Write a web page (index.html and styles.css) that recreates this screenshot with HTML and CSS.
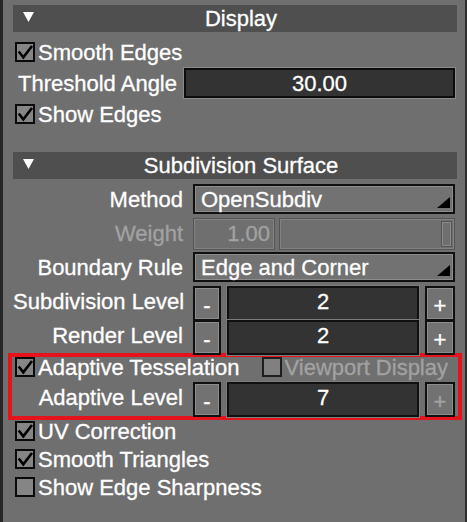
FILE: index.html
```html
<!DOCTYPE html>
<html lang="en">
<head>
  <meta charset="UTF-8">
  <title>Subdivision Panel</title>
  <link rel="stylesheet" href="styles.css">
</head>
<body>

  <div class="panel">

    <div class="section-head">
      <svg class="twisty" viewBox="0 0 11 10"><polygon points="0,0 11,0 5.5,10" fill="#fff"/></svg>
      <span class="section-title">Display</span>
    </div>

    <div class="rows">
      <div class="row check-row">
        <svg class="box" viewBox="0 0 20 20"><rect x="1" y="1" width="18" height="18" fill="#858585" stroke="#0a0a0a" stroke-width="2"/><path d="M3.7 9.5 L8.3 15.3 L17 4" fill="none" stroke="#000" stroke-width="2.6"/></svg>
        <span>Smooth Edges</span>
      </div>
      <div class="row field-row">
        <span class="field-label">Threshold Angle</span>
        <div class="num-field">30.00</div>
      </div>
      <div class="row check-row">
        <svg class="box" viewBox="0 0 20 20"><rect x="1" y="1" width="18" height="18" fill="#858585" stroke="#0a0a0a" stroke-width="2"/><path d="M3.7 9.5 L8.3 15.3 L17 4" fill="none" stroke="#000" stroke-width="2.6"/></svg>
        <span>Show Edges</span>
      </div>
    </div>

    <div class="section-head second">
      <svg class="twisty" viewBox="0 0 11 10"><polygon points="0,0 11,0 5.5,10" fill="#fff"/></svg>
      <span class="section-title">Subdivision Surface</span>
    </div>

    <div class="form-grid">
      <span class="label">Method</span>
      <div class="dropdown">
        <span class="dropdown-text">OpenSubdiv</span>
        <svg class="dropdown-arrow" viewBox="0 0 13 11"><polygon points="13,0 13,11 0,11" fill="#000"/></svg>
      </div>

      <span class="label disabled">Weight</span>
      <div class="weight">
        <div class="weight-field">1.00</div>
        <div class="slider"><span class="slider-handle"></span></div>
      </div>

      <span class="label">Boundary Rule</span>
      <div class="dropdown">
        <span class="dropdown-text">Edge and Corner</span>
        <svg class="dropdown-arrow" viewBox="0 0 13 11"><polygon points="13,0 13,11 0,11" fill="#000"/></svg>
      </div>

      <span class="label">Subdivision Level</span>
      <div class="spin">
        <div class="btn">-</div>
        <div class="value">2</div>
        <div class="btn">+</div>
      </div>

      <span class="label">Render Level</span>
      <div class="spin">
        <div class="btn">-</div>
        <div class="value">2</div>
        <div class="btn">+</div>
      </div>
    </div>

    <div class="highlight">
      <div class="adaptive-row">
        <div class="check-item">
          <svg class="box" viewBox="0 0 20 20"><rect x="1" y="1" width="18" height="18" fill="#858585" stroke="#0a0a0a" stroke-width="2"/><path d="M3.7 9.5 L8.3 15.3 L17 4" fill="none" stroke="#000" stroke-width="2.6"/></svg>
          <span>Adaptive Tesselation</span>
        </div>
        <div class="check-item disabled">
          <svg class="box" viewBox="0 0 20 20"><rect x="1" y="1" width="18" height="18" fill="#808080" stroke="#1e1e1e" stroke-width="2"/></svg>
          <span>Viewport Display</span>
        </div>
      </div>
      <div class="form-grid inner">
        <span class="label">Adaptive Level</span>
        <div class="spin">
          <div class="btn">-</div>
          <div class="value">7</div>
          <div class="btn disabled">+</div>
        </div>
      </div>
    </div>

    <div class="check-list">
      <div class="check-item">
        <svg class="box" viewBox="0 0 20 20"><rect x="1" y="1" width="18" height="18" fill="#858585" stroke="#0a0a0a" stroke-width="2"/><path d="M3.7 9.5 L8.3 15.3 L17 4" fill="none" stroke="#000" stroke-width="2.6"/></svg>
        <span>UV Correction</span>
      </div>
      <div class="check-item">
        <svg class="box" viewBox="0 0 20 20"><rect x="1" y="1" width="18" height="18" fill="#858585" stroke="#0a0a0a" stroke-width="2"/><path d="M3.7 9.5 L8.3 15.3 L17 4" fill="none" stroke="#000" stroke-width="2.6"/></svg>
        <span>Smooth Triangles</span>
      </div>
      <div class="check-item">
        <svg class="box" viewBox="0 0 20 20"><rect x="1" y="1" width="18" height="18" fill="#858585" stroke="#0a0a0a" stroke-width="2"/></svg>
        <span>Show Edge Sharpness</span>
      </div>
    </div>

  </div>

</body>
</html>
```

FILE: styles.css
```css
* {
  box-sizing: border-box;
}

body {
  margin: 0;
  height: 522px;
  overflow: hidden;
  background: #6f6f6f;
  border-left: 3px solid #262626;
  border-right: 2px solid #2e2e2e;
  font-family: "Liberation Sans", Arial, sans-serif;
  font-size: 22px;
  color: #fff;
  -webkit-text-stroke: 0.3px;
}

.panel {
  padding: 5px 8px 0 10px;
}

/* section headers */

.section-head {
  display: flex;
  height: 27px;
  line-height: 28px;
  background: #4f4f4f;
}

.section-head.second {
  margin-top: 23px;
}

.twisty {
  width: 11px;
  height: 10px;
  margin: 7px 0 0 10px;
  flex-shrink: 0;
}

.section-title {
  flex: 1;
  text-align: center;
  margin-right: 9px;
}

/* display section */

.rows {
  margin-top: 4px;
}

.row {
  height: 31px;
  display: flex;
  align-items: center;
}

.check-row,
.check-item {
  display: flex;
  align-items: center;
  gap: 3px;
  padding-left: 2px;
}

.check-row span,
.check-item span {
  padding-top: 2px;
}

.box {
  width: 20px;
  height: 20px;
  flex-shrink: 0;
}

.field-row {
  display: grid;
  grid-template-columns: 171px 1fr;
  padding-right: 2px;
}

.field-label {
  padding-left: 5px;
  padding-top: 2px;
}

.num-field {
  height: 30px;
  line-height: 28px;
  text-align: center;
  background: #333;
  border: 2px solid #0c0c0c;
  box-shadow: 0 0 0 1px #8a8a8a;
}

/* subdivision section */

.form-grid {
  display: grid;
  grid-template-columns: 170px 1fr;
  grid-auto-rows: 30px;
  column-gap: 10px;
  row-gap: 4px;
  margin-top: 5px;
  padding-right: 2px;
}

.form-grid.inner {
  margin-top: 5px;
}

.label {
  text-align: right;
  align-self: center;
  white-space: nowrap;
  padding-top: 2px;
}

.disabled {
  color: #a2a2a2;
}

.dropdown {
  display: flex;
  align-items: center;
  padding: 2px 0 0 6px;
  background: #727272;
  border: 2px solid #101010;
  box-shadow: inset 0 0 0 1px #8c8c8c;
}

.dropdown-text {
  flex: 1;
}

.dropdown-arrow {
  width: 13px;
  height: 11px;
  align-self: flex-end;
  margin: 0 3px 4px 0;
}

.weight {
  display: grid;
  grid-template-columns: 82px 1fr;
  column-gap: 4px;
}

.weight-field {
  border: 1px solid #555;
  box-shadow: inset 0 0 0 1px #828282;
  color: #a2a2a2;
  text-align: right;
  padding-right: 4px;
  line-height: 30px;
}

.slider {
  display: flex;
  justify-content: flex-end;
  padding: 2px;
  border: 1px solid #555;
  box-shadow: inset 0 0 0 1px #828282;
}

.slider-handle {
  width: 11px;
  border: 1px solid #555;
  box-shadow: inset 0 0 0 1px #8a8a8a;
}

.spin {
  display: grid;
  grid-template-columns: 28px 1fr 30px;
  column-gap: 6px;
}

.btn {
  display: flex;
  align-items: center;
  justify-content: center;
  padding-top: 5px;
  background: #727272;
  border: 2px solid #101010;
  box-shadow: inset 0 0 0 1px #8c8c8c;
}

.value {
  text-align: center;
  line-height: 28px;
  background: #333;
  border: 2px solid #101010;
  box-shadow: 0 0 0 1px #7c7c7c;
}

/* highlighted block */

.highlight {
  margin: 3px -5px 0 -5px;
  padding: 0 1px 4px 1px;
  border: 4px solid #e5131b;
}

.adaptive-row {
  height: 20px;
  display: flex;
  justify-content: space-between;
  align-items: center;
  padding-right: 9px;
}

.check-list {
  display: flex;
  flex-direction: column;
  gap: 8px;
  padding-top: 1px;
}

.check-list .check-item {
  height: 20px;
}
```
